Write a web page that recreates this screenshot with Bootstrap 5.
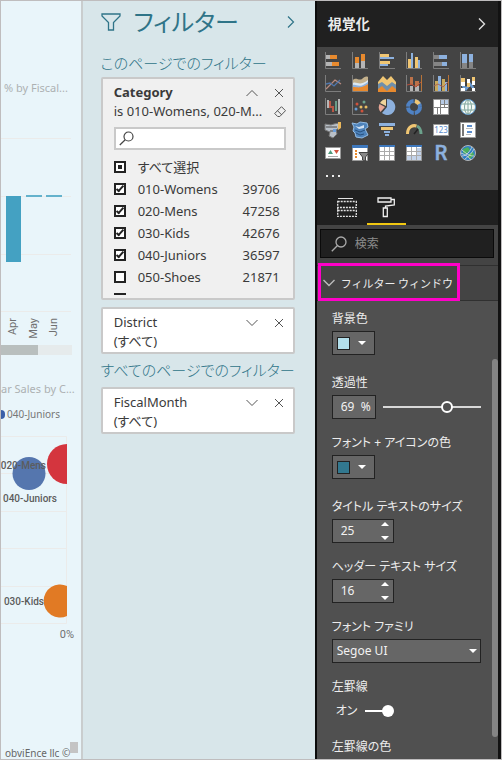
<!DOCTYPE html>
<html lang="ja">
<head>
<meta charset="utf-8">
<meta name="viewport" content="width=device-width, initial-scale=1">
<title>フィルター ウィンドウ</title>
<link href="https://cdn.jsdelivr.net/npm/bootstrap@5.3.0/dist/css/bootstrap.min.css" rel="stylesheet">
<style>
body{font-family:"Noto Sans","Noto Sans CJK JP",sans-serif;font-size:13px;line-height:20px;color:#333;font-feature-settings:"palt"}
.shell{display:grid;grid-template-columns:82fr 233fr 187fr;border:1px solid #bfbdbe}
.shell>*{min-width:0}
button{color:inherit}
button.bare{background:none;border:0;padding:0;line-height:1;display:flex}
svg{display:block;flex:none}
/* report */
.report{background:#e9f5fa;border-right:2px solid #c9cdce}
.report-title{font-size:12px;line-height:16px;color:#adb1b2;font-weight:400}
.lead-in{padding:79px 0 4px 3px;font-size:11px}
.second{padding-top:26px;font-size:11px}
.hbar{height:10px;width:71px;background:#e6ebec}
.hbar div{height:10px;width:37px;background:#b9bfbe}
.legend-row{font-size:10px;line-height:16px;color:#777;height:20px;gap:2px;margin:7px 0 2px}
.half-dot{width:4px;height:9px;background:#3a5fa8;border-radius:0 5px 5px 0}
.chart text{font-family:Roboto,sans-serif;font-size:11px;fill:#707070}
.chart .names text{font-size:10px;fill:#5c5c5c}
.credit{font-size:10px;line-height:12px;color:#666;padding:5px 0 0 4px}
.grip{width:8px;height:11px;background:#c4c4c4}
/* filters */
.filters{background:#d8e6ea;padding:1px 20px 0 18px;color:#2f7488}
.filters h1{font-size:24px;line-height:32px;font-weight:400;margin:0 0 0 13px}
.filters h2{font-size:15px;line-height:20px;font-weight:300;margin:0}
.filters .pages{margin:6px 0 7px}
.pane-head{height:40px;margin-bottom:11px}
.fcard{border:2px solid #c9c9c9;border-radius:2px;background:#fff;color:#3a3a3a;padding:4px 7px 1px 11px}
.fcard.open{background:#f0f0f0;padding-bottom:3px;margin-top:4px}
.fcard+.fcard{margin-top:7px}
.fcard .line{height:19px;line-height:19px}
.fcard .name{flex:1}
.find{border:2px solid #c9c9c9;background:#fff;height:23px;margin:6px 0 5px;padding-left:3px}
.find input{border:0;outline:0;background:none;flex:1;min-width:0;height:18px;font-size:13px}
.opts{height:140px;overflow:hidden}
.opts label{display:flex;align-items:center;height:22px;line-height:22px;flex:none}
.opts label:first-child{height:23px}
.opts label span:nth-child(2){flex:1;padding-left:12px}
.opts label span:nth-child(3){padding-right:6px}
.opts input{appearance:none;width:12px;height:12px;border:2px solid #222;background:#fff;margin:0;display:grid;place-content:center}
.opts input:indeterminate::after{content:"";width:4px;height:4px;background:#222}
.opts input:checked::after{content:"";width:8px;height:4px;border:solid #222;border-width:0 0 2px 2px;transform:rotate(-48deg);margin-top:-2px}
/* visualizations */
.viz{background:#505050;border-left:2px solid #0c0c0c;border-right:3px solid #121212;color:#ececec;font-size:12px}
.viz-head{height:46px;background:#202020;padding:0 12px 0 11px}
.viz-head h2{font-size:14px;line-height:20px;font-weight:700;margin:0;font-feature-settings:normal}
.gallery{background:#444;height:143px;padding:5px 7px 0 7px}
.icons{display:grid;grid-template-columns:repeat(6,18px);gap:5px 9px}
.dots{margin:13px 0 0 2px;gap:4px}
.dots i{width:2px;height:2px;background:#eee}
.tabs{background:#202020;height:35px;padding-left:11px}
.tabs button{width:39px;height:35px;justify-content:center;padding-top:7px}
.tabs .on{border-bottom:2px solid #f2c811}
.seek-wrap{background:#444;padding:4px 4px 7px 3px;border-bottom:1px solid #303030}
.seek{background:#202020;border:1px solid #0a0a0a;height:29px;padding-left:10px;gap:8px}
.seek input{background:none;border:0;outline:0;color:#ddd;min-width:0;flex:1;font-size:12px}
.seek input::placeholder{color:#8c8c8c}
.section-row{background:#444;height:35px;border-bottom:1px solid #303030;padding-left:6px}
.section-row button{gap:6px;font-size:11px;align-items:center;white-space:nowrap}
.section-row .title{font-family:"Noto Sans CJK JP",sans-serif}
.marker{position:absolute;left:1px;right:38px;top:-3px;bottom:-1px;border:3px solid #ff00c8;pointer-events:none}
.settings{padding:8px 0 0 15px;flex:1;min-width:0;min-height:0;overflow:hidden}
.setting{margin-bottom:14px}
.setting.tint{margin-bottom:18px}
.setting>label,.setting>.cap{display:block;line-height:20px;height:20px;margin-bottom:2px;white-space:nowrap}
.box{background:#666;border:1px solid #222;height:24px;color:#f2f2f2;font-size:12px}
.tint .box{width:43px;padding:0 8px 0 4px}
.swatch{width:13px;height:13px;border:1px solid #222}
.pale{background:#b3dfeb}.teal{background:#32788f}
.tri{border:4px solid transparent;border-top-color:#fff;border-bottom:0;width:0;height:0}
.tri.up{border-top:0;border-bottom:4px solid #fff}
.box input{appearance:textfield;background:none;border:0;outline:0;color:inherit;width:20px;padding:0}
.box input::-webkit-inner-spin-button{appearance:none;margin:0}
.pct{width:44px;padding:0 4px 0 8px}
.num{width:62px;padding:0 4px 0 8px}
.num .steps{height:18px}
.slide{appearance:none;background:none;flex:1;min-width:0;margin:0 11px 0 7px;height:24px}
.slide::-webkit-slider-runnable-track{height:2px;background:#d8d8d8}
.slide::-webkit-slider-thumb{appearance:none;width:12px;height:12px;border-radius:50%;background:#505050;border:2px solid #fff;margin-top:-5px}
.pick{position:relative;margin-right:11px}
.pick select{appearance:none;width:100%;padding:0 4px;line-height:20px;border-radius:0}
.pick .tri{position:absolute;right:4px;top:10px;pointer-events:none}
.setting>.toggle{height:24px;gap:8px;padding-left:4px}
.toggle input{appearance:none;margin:0;width:29px;height:12px;background:linear-gradient(#fff,#fff) 0 5px/20px 2px no-repeat;display:flex;justify-content:flex-end}
.toggle input::after{content:"";width:12px;height:12px;border-radius:50%;background:#fff}
.thumb-col{width:6px;padding-top:58px}
.thumb-col div{height:378px;background:#848484;border-radius:3px}
</style>
<script src="https://cdn.jsdelivr.net/npm/bootstrap@5.3.0/dist/js/bootstrap.bundle.min.js"></script>
</head>
<body>
<div class="shell vh-100 overflow-hidden">

<section class="report overflow-hidden d-flex flex-column">
  <h2 class="report-title lead-in m-0 text-nowrap">% by Fiscal...</h2>
  <svg class="chart" width="79" height="245" viewBox="1 100 79 245">
    <g stroke="#ebebea"><path d="M1 138.500H71M1 196.500H71M1 254.500H71M1 311.500H71"/></g>
    <path fill="#44a1c2" d="M6 196h15v66H6z"/>
    <path fill="#64b2cc" d="M26 195h16v2H26zM46 195h16v2H46z"/>
    <g text-anchor="end">
      <text transform="translate(16 318) rotate(-90)">Apr</text>
      <text transform="translate(37 318) rotate(-90)">May</text>
      <text transform="translate(57 318) rotate(-90)">Jun</text>
    </g>
  </svg>
  <div class="hbar"><div></div></div>
  <h2 class="report-title second text-nowrap mb-0">ar Sales by C...</h2>
  <div class="legend-row d-flex align-items-center text-nowrap"><span class="half-dot"></span>040-Juniors</div>
  <svg class="chart" width="79" height="216" viewBox="1 426 79 216">
    <path stroke="#ebebea" fill="none" d="M1 436.500H66.500V623.500H1M1 473.500H66M1 511.500H66M1 548.500H66M1 586.500H66"/>
    <path fill="#d4353e" d="M67 444a20 20 0 0 0 0 40z"/>
    <path fill="#e17a24" d="M67 586a16.500 16.500 0 1 0 0 30z"/>
    <circle cx="29" cy="473.500" r="16.500" fill="#5576ae"/>
    <g class="names" font-weight="500" text-anchor="end">
      <text x="46" y="469">020-Mens</text>
      <text x="57" y="502">040-Juniors</text>
      <text x="44" y="605">030-Kids</text>
    </g>
    <text x="74" y="638" text-anchor="end">0%</text>
  </svg>
  <div class="mt-auto d-flex align-items-start"><div class="credit text-nowrap">obviEnce llc ©</div><div class="grip flex-shrink-0"></div></div>
</section>

<section class="filters overflow-hidden">
  <div class="pane-head d-flex align-items-center">
    <svg width="20" height="20" viewBox="0 0 20 20" fill="none" stroke="#2f7488" stroke-width="1.300"><path d="M1 2h18v2l-6.500 6.500V18h-5v-7.500L1 4z"/></svg>
    <h1 class="flex-grow-1 text-nowrap">フィルター</h1>
    <button class="bare ms-auto" aria-label="折りたたむ"><svg width="8" height="12" viewBox="0 0 8 12" fill="none" stroke="#2f7488" stroke-width="1.200"><path d="M1 .5 6.500 6 1 11.500"/></svg></button>
  </div>
  <h2 class="text-nowrap">このページでのフィルター</h2>
  <div class="fcard open">
    <div class="d-flex align-items-center line"><strong class="name">Category</strong>
      <button class="bare me-3" aria-label="閉じる"><svg width="12" height="8" viewBox="0 0 12 8" fill="none" stroke="#555"><path d="M.5 7 6 1.500 11.500 7"/></svg></button>
      <button class="bare" aria-label="削除"><svg width="12" height="10" viewBox="0 0 12 10" fill="none" stroke="#555"><path d="m1 1 8 8M9 1 1 9"/></svg></button>
    </div>
    <div class="d-flex align-items-center line"><span class="name text-nowrap">is 010-Womens, 020-M...</span>
      <button class="bare" aria-label="クリア"><svg width="12" height="12" viewBox="0 0 12 12" fill="none" stroke="#555"><path d="M.7 7.500 7.500.7l4 4-5.700 5.800H3.700zM3.500 4.700l4.200 4.200"/></svg></button>
    </div>
    <div class="find d-flex align-items-center">
      <svg width="15" height="15" viewBox="0 0 15 15" fill="none" stroke="#444" stroke-width="1.200"><circle cx="9.500" cy="5.500" r="4.500"/><path d="M6.200 8.700.8 14"/></svg>
      <input type="search" aria-label="値の検索">
    </div>
    <div class="opts d-flex flex-column">
      <label><input type="checkbox" id="all"><span>すべて選択</span></label>
      <label><input type="checkbox" checked><span>010-Womens</span><span>39706</span></label>
      <label><input type="checkbox" checked><span>020-Mens</span><span>47258</span></label>
      <label><input type="checkbox" checked><span>030-Kids</span><span>42676</span></label>
      <label><input type="checkbox" checked><span>040-Juniors</span><span>36597</span></label>
      <label><input type="checkbox"><span>050-Shoes</span><span>21871</span></label>
      <label><input type="checkbox" aria-label="次の項目"></label>
    </div>
  </div>
  <div class="fcard">
    <div class="d-flex align-items-center line"><span class="name">District</span>
      <button class="bare me-3" aria-label="開く"><svg width="12" height="8" viewBox="0 0 12 8" fill="none" stroke="#555"><path d="M.5 1 6 6.500 11.500 1"/></svg></button>
      <button class="bare" aria-label="削除"><svg width="12" height="10" viewBox="0 0 12 10" fill="none" stroke="#555"><path d="m1 1 8 8M9 1 1 9"/></svg></button>
    </div>
    <div class="line">(すべて)</div>
  </div>
  <h2 class="pages text-nowrap">すべてのページでのフィルター</h2>
  <div class="fcard">
    <div class="d-flex align-items-center line"><span class="name">FiscalMonth</span>
      <button class="bare me-3" aria-label="開く"><svg width="12" height="8" viewBox="0 0 12 8" fill="none" stroke="#555"><path d="M.5 1 6 6.500 11.500 1"/></svg></button>
      <button class="bare" aria-label="削除"><svg width="12" height="10" viewBox="0 0 12 10" fill="none" stroke="#555"><path d="m1 1 8 8M9 1 1 9"/></svg></button>
    </div>
    <div class="line">(すべて)</div>
  </div>
</section>

<section class="viz overflow-hidden d-flex flex-column">
  <div class="viz-head d-flex align-items-center justify-content-between flex-shrink-0"><h2>視覚化</h2>
    <button class="bare" aria-label="折りたたむ"><svg width="8" height="12" viewBox="0 0 8 12" fill="none" stroke="#ddd" stroke-width="1.400"><path d="M1 .5 6.500 6 1 11.500"/></svg></button></div>
  <div class="gallery flex-shrink-0">
    <div class="icons">
      <button class="bare" aria-label="積み上げ横棒"><svg width="18" height="18"><path fill="#b5b5b5" d="M2 3h4v4H2zM2 10h6v4H2z"/><path fill="#e88a2e" d="M6 3h7v4H6zM8 10h7v4H8z"/><path d="M1.500 0v16.500H17" fill="none" stroke="#7d7d7d"/></svg></button>
      <button class="bare" aria-label="積み上げ縦棒"><svg width="18" height="18"><path fill="#e88a2e" d="M4 5h4v6H4zM10 2h4v7h-4z"/><path fill="#b5b5b5" d="M4 11h4v5H4zM10 9h4v7h-4z"/><path d="M1.500 0v16.500H17" fill="none" stroke="#7d7d7d"/></svg></button>
      <button class="bare" aria-label="集合横棒"><svg width="18" height="18"><path fill="#f0c673" d="M2 2h9v3H2zM2 9h10v3H2z"/><path fill="#8db1de" d="M2 5h14v2H2zM2 12h8v2H2z"/><path d="M1.500 0v16.500H17" fill="none" stroke="#7d7d7d"/></svg></button>
      <button class="bare" aria-label="集合縦棒"><svg width="18" height="18"><path fill="#f0c673" d="M3 7h3v9H3zM10 5h3v11h-3z"/><path fill="#8db1de" d="M6 1h2v15H6zM13 8h2v8h-2z"/><path d="M1.500 0v16.500H17" fill="none" stroke="#7d7d7d"/></svg></button>
      <button class="bare" aria-label="100% 横棒"><svg width="18" height="18"><path fill="#858585" d="M2 3h5v4H2zM2 10h8v4H2z"/><path fill="#8db1de" d="M7 3h8v4H7zM10 10h5v4h-5z"/><path d="M1.500 0v16.500H17" fill="none" stroke="#7d7d7d"/></svg></button>
      <button class="bare" aria-label="100% 縦棒"><svg width="18" height="18"><path fill="#8db1de" d="M3 2h5v9H3zM10 2h4v8h-4z"/><path fill="#858585" d="M3 11h5v5H3zM10 10h4v6h-4z"/><path d="M1.500 0v16.500H17" fill="none" stroke="#7d7d7d"/></svg></button>

      <button class="bare" aria-label="折れ線"><svg width="18" height="18" fill="none"><path stroke="#b98b80" stroke-width="1.300" d="m2 14 9-9 6 4"/><path stroke="#4f77ad" stroke-width="1.300" d="m2 9 4-1 4 3 6-6"/><path d="M1.500 0v16.500H17" stroke="#7d7d7d"/></svg></button>
      <button class="bare" aria-label="面"><svg width="18" height="18"><path fill="#c3b08c" d="M2 5c3-3 6 1 9-1 2-2 4-3 6-2v14H2z"/><path fill="#dce9f3" d="M2 8c4-2 6 4 15-3v11H2z"/><path fill="#8db1de" d="M2 10c4-1 6 4 15-3v9H2z"/><path fill="#e88a2e" d="M2 12c5 0 7 2 15-3v7H2z"/><path d="M1.500 0v16.500H17" fill="none" stroke="#7d7d7d"/></svg></button>
      <button class="bare" aria-label="積み上げ面"><svg width="18" height="18"><path fill="#e88a2e" d="m0 12 4-3 5 4 5-4 4 3v5H0z"/><path fill="#f0c673" d="m0 7 5-6 4 4 4-4 5 6v3l-4-2-5 4-5-4-4 2z"/><path fill="#6f8fab" d="m0 9 4-2 5 4 5-4 4 3v4l-4-3-5 5-5-5-4 3z"/></svg></button>
      <button class="bare" aria-label="折れ線と積み上げ"><svg width="18" height="18"><path fill="#bd7249" d="M5 2h3v8H5zM10 6h4v5h-4z"/><path fill="#b5b5b5" d="M5 11h3v5H5zM10 11h4v5h-4z"/><path d="m2 10 4-1 5 3 5-5" fill="none" stroke="#b54b37"/><path d="M1.500 0v16.500H17" fill="none" stroke="#7d7d7d"/><path d="M16.500 0v16" stroke="#b87338"/></svg></button>
      <button class="bare" aria-label="折れ線と集合"><svg width="18" height="18"><path fill="#c9a95c" d="M3 6h3v10H3zM10 4h3v12h-3z"/><path fill="#8db1de" d="M6 1h3v15H6zM13 7h2v9h-2z"/><path d="m2 11 4-2 5 3 5-5" fill="none" stroke="#a86756"/><path d="M1.500 0v16.500H17" fill="none" stroke="#7d7d7d"/><path d="M16.500 0v16" stroke="#b87338"/></svg></button>
      <button class="bare" aria-label="リボン"><svg width="18" height="18"><path fill="#6c9bd0" d="m3 8 4 4 4-5 4 5v4l-4-5-4 5-4-4z"/><path fill="#f0c673" d="M2 3h4v4H2zM8 8h3v4H8zM13 2h3v4h-3z"/><path fill="#fff" d="M2 7h4v4H2zM8 4h3v4H8zM13 6h3v4h-3zM2 13h4v3H2zM13 13h3v3h-3z"/><path d="M1.500 0v16.500H17" fill="none" stroke="#7d7d7d"/></svg></button>

      <button class="bare" aria-label="ウォーターフォール"><svg width="18" height="18" fill="none"><path stroke="#b5b5b5" stroke-width="2" d="M4 2v8M15 1v15"/><path stroke="#b95745" stroke-width="2" d="M6 3v6h3v5"/><path stroke="#6a9b88" stroke-width="2" d="M12 13V3"/><path d="M1.500 0v16.500H17" stroke="#7d7d7d"/></svg></button>
      <button class="bare" aria-label="散布図"><svg width="18" height="18"><g fill="#d0523c"><circle cx="6" cy="6" r="1.500"/><circle cx="11" cy="13" r="1.500"/></g><g fill="#e9bc62"><circle cx="10" cy="9" r="1.500"/><circle cx="15" cy="9" r="1.500"/></g><g fill="#679bd3"><circle cx="5" cy="11" r="1.500"/></g><g fill="#6fa58f"><circle cx="13" cy="4" r="1.500"/></g><path d="M1.500 0v16.500H17" fill="none" stroke="#7d7d7d"/></svg></button>
      <button class="bare" aria-label="円"><svg width="18" height="18"><path fill="#8db1de" d="M9 9V1a8 8 0 1 1-5 14z"/><path fill="#f0d59b" d="M8 8V1a8 8 0 0 0-6 4z"/><path fill="#e8a796" d="M7 9 1.500 6a8 8 0 0 0 1 8z"/></svg></button>
      <button class="bare" aria-label="ドーナツ"><svg width="18" height="18" fill="none" stroke-width="4"><circle cx="9" cy="9" r="6" stroke="#4f82c4" stroke-dasharray="8.400 1"/><path stroke="#f0c673" d="M10 3a6 6 0 0 1 4 3"/></svg></button>
      <button class="bare" aria-label="ツリーマップ"><svg width="18" height="18"><path fill="#fff" stroke="#9a9a9a" d="M1.500 1.500h15v15h-15z"/><path fill="#b7cbe6" d="M9 2h7v5H9z"/><path stroke="#808080" d="M8.500 2v14M2 9.500h14M12.500 2v7M9 6.500h7M5.500 10v6"/></svg></button>
      <button class="bare" aria-label="マップ"><svg width="18" height="18" fill="none" stroke="#7fa59c"><circle cx="9" cy="9" r="7.500" fill="#f5faf6" stroke="#5d9bd0"/><ellipse cx="9" cy="9" rx="3.500" ry="7"/><path d="M2 6h14M2 12h14M9 2v14"/></svg></button>

      <button class="bare" aria-label="塗り分け地図"><svg width="18" height="18"><path fill="#b9c0c8" stroke="#777" d="m1 3 6 1 3-1 5-1v5l-3 2 1 4-4 4-4-2 1-4-5-2z"/><path fill="#e9b75c" d="M14 1h3v6l-3 2z"/><path stroke="#4a4a4a" d="M2 6h11M6 10h6"/><path fill="#6b9edc" d="M9 8h3v3H9z"/></svg></button>
      <button class="bare" aria-label="図形マップ"><svg width="18" height="18"><path fill="#4e83bb" stroke="#93bce4" d="m1 2 5 1 3-2 7 1 1 4-3 2 3 6-6 3-6-1-1-4-2-2 1-4z"/><path fill="#cfe0f2" d="m4 5 4 1 5-2v3l-5 1z"/><path stroke="#28507c" fill="none" d="m4 9 5 2 5-2M5 12l4 2 4-1"/></svg></button>
      <button class="bare" aria-label="じょうご"><svg width="18" height="18"><path fill="#8db1de" d="M1 2h16v3H1zM6 10h6v2H6zM7 13h4v2H7z"/><path fill="#f0c673" d="M3 6h12v3H3z"/></svg></button>
      <button class="bare" aria-label="ゲージ"><svg width="18" height="18" fill="none" stroke-width="3"><path stroke="#f0c673" d="M2.500 13c0-8 6-9 9-8"/><path stroke="#6ca28c" d="M12 5c2 1 4 4 4 8"/><path stroke="#222" stroke-width="1.500" d="m9 13 4-5"/></svg></button>
      <button class="bare" aria-label="カード"><svg width="18" height="18"><path fill="#fff" stroke="#9a9a9a" d="M1.500 3.500h15v11h-15z"/><text x="9" y="12" font-size="8" text-anchor="middle" fill="#5a8ccc">123</text></svg></button>
      <button class="bare" aria-label="複数行カード"><svg width="18" height="18"><path fill="#fff" stroke="#9a9a9a" d="M1.500 1.500h15v15h-15z"/><path fill="#777" d="M3 3h2v12H3z"/><path stroke="#5a8ccc" stroke-width="2" d="M8 5h5M8 11h5"/><path stroke="#bbb" d="M7 7.500h7M7 13.500h5"/></svg></button>

      <button class="bare" aria-label="KPI"><svg width="18" height="18"><path fill="#fff" stroke="#9a9a9a" d="M1.500 3.500h15v11h-15z"/><path fill="#4f9b7c" d="m4 10 2.500-4L9 10z"/><path fill="#d0523c" d="m10 6 2.500 4L15 6z"/><path stroke="#aaa" d="M4 12.500h10"/></svg></button>
      <button class="bare" aria-label="スライサー"><svg width="18" height="18"><path fill="#fff" stroke="#9a9a9a" d="M1.500 1.500h15v15h-15z"/><path fill="#3e78bd" d="M1 1h16v3H1z"/><path fill="#e88a2e" d="M4 6h2v2H4zM4 9h2v2H4zM4 12h2v2H4z"/><path fill="#888" stroke="#444" d="M8 8.500h10L14.500 13v4l-3-1v-3z"/></svg></button>
      <button class="bare" aria-label="テーブル"><svg width="18" height="18"><path fill="#fff" stroke="#9a9a9a" d="M1.500 1.500h15v15h-15z"/><path fill="#3e78bd" d="M1 1h16v2H1z"/><path stroke="#aaa" d="M6.500 3v13M11.500 3v13M2 7.500h14M2 11.500h14"/></svg></button>
      <button class="bare" aria-label="マトリックス"><svg width="18" height="18"><path fill="#fff" stroke="#9a9a9a" d="M1.500 1.500h15v15h-15z"/><path fill="#3e78bd" d="M1 1h16v2H1z"/><path fill="#c3d3ea" d="M11 4h5v12H2v-4h9z"/><path stroke="#aaa" d="M6.500 3v13M11.500 3v13M2 7.500h14M2 11.500h14"/></svg></button>
      <button class="bare" aria-label="R スクリプト"><svg class="overflow-visible" width="18" height="18"><text x="9" y="16" font-size="20" font-weight="500" text-anchor="middle" fill="#8db1de" stroke="#8db1de" stroke-width=".5" style="font-family:Roboto,sans-serif">R</text></svg></button>
      <button class="bare" aria-label="ArcGIS マップ"><svg width="18" height="18" fill="none"><circle cx="9" cy="9" r="7.500" fill="#2d7fc4" stroke="#b5b5b5"/><path fill="#4bb05c" d="m4 5 5-2 2 3-4 4-3-1zM10 10l4-2 1 3-4 4-2-2z"/><path stroke="#ddd" stroke-width=".8" d="M3 6c6 5 8 6 12 6M3 12c5 0 8-5 10-9M2 9c5 2 8 4 10 7M6 15c4-3 7-6 9-10"/></svg></button>
    </div>
    <div class="dots d-flex"><i></i><i></i><i></i></div>
  </div>
  <div class="tabs d-flex flex-shrink-0">
    <button class="bare" aria-label="フィールド"><svg width="20" height="20" viewBox="0 0 20 20" fill="none" stroke="#e2e2e2"><path d="M1 1.500h15"/><path stroke-dasharray="2 1" stroke-width="1.300" d="M.7 4.500h18.600v6H.7zM.7 13.500h18.600v6H.7zM.7 10.500v3"/></svg></button>
    <button class="bare on" aria-label="書式"><svg width="20" height="21" viewBox="0 0 20 21" fill="none" stroke="#f0f0f0" stroke-width="1.300"><path d="M2 1h13v4H2zM15 2.500h3.300V8L9.500 9v2M7.300 11h4v8.500h-4z"/></svg></button>
  </div>
  <div class="seek-wrap flex-shrink-0"><div class="seek d-flex align-items-center">
    <svg width="16" height="16" viewBox="0 0 16 16" fill="none" stroke="#aaa" stroke-width="1.300"><circle cx="10" cy="6" r="5"/><path d="M6.500 9.500.8 15.200"/></svg>
    <input class="p-0" type="search" placeholder="検索" aria-label="検索"></div></div>
  <div class="section-row d-flex align-items-center position-relative flex-shrink-0">
    <button class="bare" aria-expanded="true"><svg width="12" height="8" viewBox="0 0 12 8" fill="none" stroke="#bbb" stroke-width="1.400"><path d="M.5 1 6 6.500 11.500 1"/></svg><span class="title">フィルター ウィンドウ</span></button>
    <div class="marker"></div>
  </div>
  <div class="d-flex flex-grow-1 overflow-hidden">
    <div class="settings">
      <div class="setting tint"><span class="cap">背景色</span><button class="box d-flex align-items-center justify-content-between" aria-label="背景色"><span class="swatch pale"></span><span class="tri"></span></button></div>
      <div class="setting"><label for="tr">透過性</label><div class="d-flex"><div class="box pct d-flex align-items-center justify-content-between"><input id="tr" type="number" value="69"><span>%</span></div><input class="slide" type="range" value="68" aria-label="透過性"></div></div>
      <div class="setting tint"><span class="cap">フォント + アイコンの色</span><button class="box d-flex align-items-center justify-content-between" aria-label="フォントの色"><span class="swatch teal"></span><span class="tri"></span></button></div>
      <div class="setting"><label for="ts">タイトル テキストのサイズ</label><div class="box num d-flex align-items-center justify-content-between"><input id="ts" type="number" value="25"><div class="steps d-flex flex-column justify-content-between"><button class="bare" aria-label="増やす"><span class="tri up"></span></button><button class="bare" aria-label="減らす"><span class="tri"></span></button></div></div></div>
      <div class="setting"><label for="hs">ヘッダー テキスト サイズ</label><div class="box num d-flex align-items-center justify-content-between"><input id="hs" type="number" value="16"><div class="steps d-flex flex-column justify-content-between"><button class="bare" aria-label="増やす"><span class="tri up"></span></button><button class="bare" aria-label="減らす"><span class="tri"></span></button></div></div></div>
      <div class="setting"><label for="ff">フォント ファミリ</label><div class="pick"><select id="ff" class="box"><option>Segoe UI</option></select><span class="tri"></span></div></div>
      <div class="setting"><span class="cap">左罫線</span><label class="toggle d-flex align-items-center">オン<input type="checkbox" role="switch" checked></label></div>
      <div class="setting"><span class="cap">左罫線の色</span></div>
    </div>
    <div class="thumb-col flex-shrink-0"><div></div></div>
  </div>
</section>
</div>
<script>document.getElementById('all').indeterminate = true;</script>
</body>
</html>
